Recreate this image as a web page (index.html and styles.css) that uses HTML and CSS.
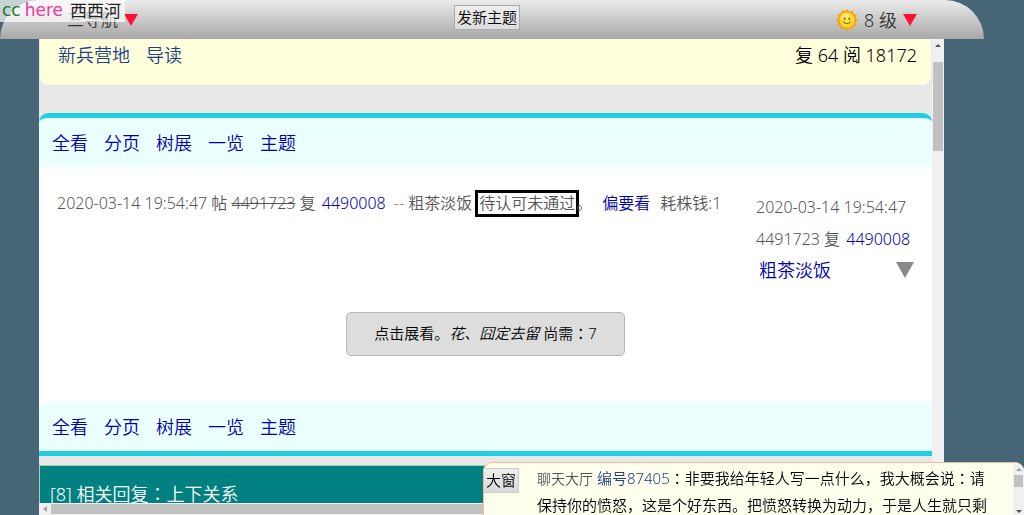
FILE: index.html
```html
<!DOCTYPE html>
<html lang="zh-CN">
<head>
<meta charset="utf-8">
<meta name="viewport" content="width=device-width, initial-scale=1">
<title>西西河</title>
<link rel="stylesheet" href="styles.css">
</head>
<body>
<header class="topbar">
  <a class="brand" href="#"><span class="brand-cc">cc</span><span class="brand-here">here</span><span class="brand-name">西西河</span></a>
  <div class="nav"><button class="menu" type="button">三导航</button><span class="tri tri-red"></span></div>
  <button class="new-topic" type="button">发新主题</button>
  <div class="level">
    <svg class="sun" viewBox="0 0 22 22" aria-hidden="true">
      <path fill="#f5a51c" d="M11 0l2.6 2.8L17 1.5l.6 3.3 3.4.9-1.3 3.1L22 11l-2.8 2.6 1.3 3.4-3.5.6-.9 3.4-3.1-1.3L11 22l-2.6-2.8L5 20.5l-.6-3.5-3.4-.9 1.3-3.1L0 11l2.8-2.6L1.5 5l3.5-.6.9-3.4L9 2.3z"/>
      <circle cx="11" cy="11" r="7.4" fill="#ffdc2e"/>
      <ellipse cx="9.5" cy="8" rx="4.5" ry="3.5" fill="#fff176" opacity=".7"/>
      <ellipse cx="8.7" cy="9.8" rx=".8" ry="1.3" fill="#6b4d08"/>
      <ellipse cx="13.3" cy="9.8" rx=".8" ry="1.3" fill="#6b4d08"/>
      <path d="M6.8 12.6q4.2 4 8.4 0" fill="none" stroke="#8a620c" stroke-width="1"/>
    </svg>
    <span>8 级</span><span class="tri tri-red"></span>
  </div>
</header>

<div class="frame">
  <main class="content">
    <div class="crumbs">
      <nav class="links links-blue"><a href="#">新兵营地</a><a href="#">导读</a></nav>
      <span>复 64 阅 18172</span>
    </div>
    <article class="post">
      <nav class="links strip strip-top"><a href="#">全看</a><a href="#">分页</a><a href="#">树展</a><a href="#">一览</a><a href="#">主题</a></nav>
      <div class="post-body">
        <p class="meta">2020-03-14 19:54:47 帖 <s>4491723</s> 复 <a class="ref" href="#">4490008</a><span class="dash">--</span> 粗茶淡饭<mark class="pending">待认可未通过</mark>。<a class="force" href="#">偏要看</a>耗株钱:1</p>
        <aside class="side">
          <span>2020-03-14 19:54:47</span>
          <span>4491723 复 <a class="ref" href="#">4490008</a></span>
          <div class="author"><a href="#">粗茶淡饭</a><span class="tri tri-gray"></span></div>
        </aside>
        <button class="expand" type="button">点击展看。<i>花、囧定去留</i> 尚需<span lang="zh-TW">：</span>7</button>
      </div>
      <nav class="links strip strip-bottom"><a href="#">全看</a><a href="#">分页</a><a href="#">树展</a><a href="#">一览</a><a href="#">主题</a></nav>
    </article>
    <section class="replies">[8] 相关回复<span lang="zh-TW">：</span>上下关系</section>
  </main>
  <div class="vbar"><span class="arrow up"></span><span class="vthumb"></span></div>
  <div class="hbar"><span class="arrow left"></span><span class="hthumb"></span></div>
</div>

<section class="chat">
  <button class="enlarge" type="button">大窗</button>
  <p class="chat-text"><span class="room">聊天大厅</span> <a href="#">编号87405</a><span lang="zh-TW">：</span>非要我给年轻人写一点什么，我大概会说<span lang="zh-TW">：</span>请保持你的愤怒，这是个好东西。把愤怒转换为动力，于是人生就只剩</p>
  <div class="chatbar"><span class="arrow up dim"></span><span class="chatthumb"></span><span class="arrow down"></span></div>
</section>
</body>
</html>
```
FILE: styles.css
```css
* { box-sizing: border-box; }
body {
  margin: 0;
  height: 100vh;
  overflow: hidden;
  display: flex;
  flex-direction: column;
  background: #466677;
  color: #000;
  font: 350 18px/30px "Noto Sans", "Noto Sans CJK SC", sans-serif;
}
button { font: inherit; color: #000; cursor: pointer; }
a { color: #0000b0; text-decoration: none; }
p { margin: 0; }
/* Full-width colons centred in their cell */
:lang(zh-TW) { font-family: "Noto Sans CJK TC", sans-serif; }

.topbar {
  position: relative;
  flex: none;
  display: flex;
  align-items: center;
  justify-content: space-between;
  height: 39px;
  margin-right: 40px;
  padding: 0 67px;
  border-radius: 39px 39px 0 0;
  background: linear-gradient(#ebebeb, #a8a8a8);
  color: #333;
}
.brand {
  position: absolute;
  top: 0;
  left: 0;
  display: flex;
  height: 22px;
  padding: 0 4px 0 2px;
  background: rgba(255, 255, 255, .7);
  font: 400 17px/20px "DejaVu Sans", "Noto Sans CJK SC", sans-serif;
}
.brand-cc { color: #1b7a2b; }
.brand-here { margin: 0 7px 0 4px; color: #f0329b; }
.brand-name { color: #222; line-height: 22px; }
.nav, .level { display: flex; align-items: center; gap: 6px; }
.menu { padding: 0; border: 0; background: none; color: #333; font-size: 17px; line-height: 24px; }
.new-topic {
  padding: 0 2px;
  margin-bottom: 4px;
  border: 1px solid #aaa;
  background: linear-gradient(#eee, #ddd);
  font-size: 15px;
  line-height: 23px;
}
.sun { width: 22px; height: 22px; }

.tri { width: 0; height: 0; border: 7px solid transparent; border-bottom: 0; }
.tri-red { border-top: 12px solid #ff1030; }
.tri-gray { border-width: 16px 9px 0; border-top-color: #888; }

.frame {
  flex: 1;
  min-height: 0;
  display: grid;
  grid-template: minmax(0, 1fr) 12px / minmax(0, 1fr) 12px;
  margin: 0 80px 0 39px;
  background: #f0f0f0;
}
.content { overflow: hidden; background: #e8e8e8; }
.crumbs {
  display: flex;
  justify-content: space-between;
  margin: 0 1px 28px;
  padding: 1px 14px 15px 18px;
  border-radius: 0 0 9px 9px;
  background: #ffffdc;
}
.links { display: flex; gap: 16px; }
.links-blue a { color: #204080; }
.post { background: #fff; border-radius: 9px 9px 0 0; }
.strip { padding: 10px 13px 9px; background: #ebffff; }
.strip-top { border-top: 5px solid #20cfe0; border-radius: 9px 9px 0 0; }
.strip-bottom { border-bottom: 5px solid #20cfe0; border-radius: 9px 9px 0 0; padding: 11px 13px 9px; }
.post-body {
  display: grid;
  grid-template-columns: minmax(0, 1fr) 158px;
  padding: 20px 18px 45px;
  color: #555;
  font-size: 16px;
  line-height: 32px;
}
.ref { margin-left: 2px; }
.dash { margin-left: 8px; color: #888; }
.pending {
  display: inline-block;
  margin-left: 6px;
  padding: 0 1px;
  outline: 3px solid #000;
  background: none;
  color: inherit;
  line-height: 21px;
}
.force { margin: 0 10px; }
.side { display: flex; flex-direction: column; padding-top: 4px; }
.author { display: flex; justify-content: space-between; align-items: center; padding-left: 3px; font-size: 18px; line-height: 30px; }
.expand {
  grid-column: 1 / -1;
  justify-self: center;
  margin-top: 27px;
  padding: 5px 27px 7px;
  border: 1px solid #b8b8b8;
  border-radius: 5px;
  background: #ddd;
  font-size: 15px;
  line-height: 30px;
}
.replies {
  margin-top: 9px;
  padding: 12px 10px;
  border: 1px solid #9cd8ac;
  background: #008080;
  color: #fff;
}

.arrow { width: 0; height: 0; border: 3px solid transparent; flex: none; }
.up { border-top: 0; border-bottom-color: #505050; }
.down { border-bottom: 0; border-top-color: #505050; }
.left { border-left: 0; border-right: 4px solid #a0a0a0; }
.dim { border-bottom-color: #a0a0a0; }
.vbar { display: flex; flex-direction: column; align-items: center; padding: 5px 1px; }
.vthumb { width: 100%; height: 89px; margin-top: 15px; background: #c1c1c1; }
.hbar { display: flex; align-items: center; gap: 4px; padding: 1px 4px; }
.hthumb { flex: 1; height: 100%; background: #c1c1c1; }

.chat {
  position: fixed;
  right: 0;
  bottom: 0;
  left: 483px;
  height: 53px;
  display: grid;
  grid-template-columns: auto minmax(0, 1fr) 11px;
  overflow: hidden;
  border: 1px solid #ffb896;
  border-width: 1px 0 0 1px;
  border-radius: 9px 9px 0 0;
  background: #ffffee;
}
.enlarge {
  align-self: start;
  margin-top: 5px;
  padding: 0 2px;
  border: 1px solid #ccc;
  border-left: 0;
  background: linear-gradient(#eee, #d8d8d8);
  font-size: 15px;
  line-height: 23px;
}
.chat-text { padding: 2px 24px 0 18px; font-size: 15px; line-height: 26px; }
.room { color: #555; font-size: 14px; }
.chat-text a { color: #204080; }
.chatbar { display: flex; flex-direction: column; align-items: center; padding: 5px 1px; background: #f0f0f0; }
.chatthumb { width: 100%; height: 12px; margin: 4px 0 auto; background: #c1c1c1; }
```
